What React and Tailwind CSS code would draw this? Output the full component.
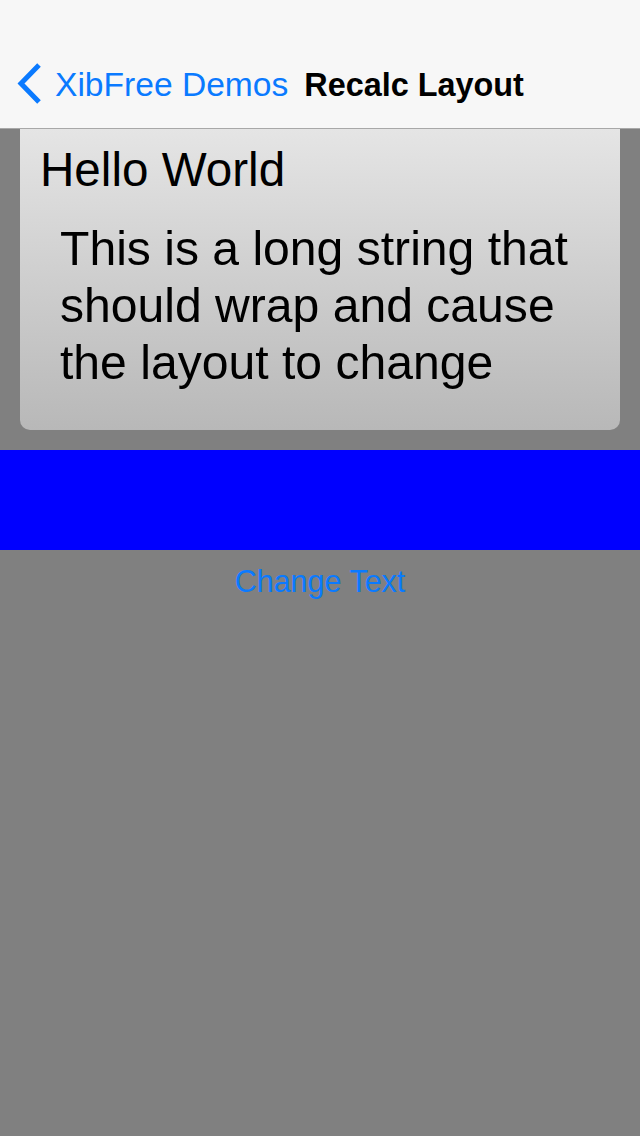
export default function App() {
  return (
    <div
      className="w-[640px] h-[1136px] bg-[#808080] flex flex-col"
      style={{ fontFamily: '"Liberation Sans", Arial, sans-serif' }}
    >
      <div className="h-[129px] shrink-0 bg-[#f7f7f7] border-b border-[#a8a8a8] pt-[41px]">
        <div className="h-[88px] flex items-center pl-[17px]">
          <svg width="26" height="44" viewBox="0 0 26 44" className="shrink-0 -mt-[2px]">
            <path
              d="M22 3 L4 21.5 L22 40"
              fill="none"
              stroke="#0a7aff"
              strokeWidth="5"
              strokeLinecap="butt"
              strokeLinejoin="miter"
            />
          </svg>
          <span className="ml-[12px] text-[33.6px] text-[#0a7aff] leading-none">XibFree Demos</span>
          <span className="ml-[16px] text-[32.4px] font-bold text-black leading-none">Recalc Layout</span>
        </div>
      </div>
      <div className="mx-[20px] rounded-b-[10px] bg-gradient-to-b from-[#e5e5e5] to-[#b8b8b8] pt-[12px] pb-[39px]">
        <div className="pl-[20px] text-[47.6px] leading-[57px] text-black">Hello World</div>
        <div className="mt-[22px] pl-[40px] pr-[20px] text-[48.1px] leading-[57px] text-black">
          This is a long string that should wrap and cause the layout to change
        </div>
      </div>
      <div className="mt-[20px] h-[100px] bg-[#0000ff]" />
      <div className="h-[62px] pt-[2px] flex items-center justify-center text-[30.5px] text-[#0a7aff]">
        Change Text
      </div>
    </div>
  );
}
